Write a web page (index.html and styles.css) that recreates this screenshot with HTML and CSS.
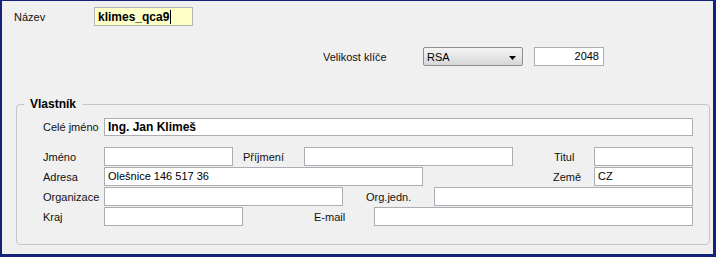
FILE: index.html
```html
<!DOCTYPE html>
<html lang="cs">
<head>
    <meta charset="utf-8" />
    <title>Certifikát</title>
    <link rel="stylesheet" href="styles.css">
</head>
<body>
    <div class="window">
        <div class="name-row">
            <label class="name-label">Název</label>
            <div class="name-input">klimes_qca9<span class="caret"></span></div>
        </div>

        <div class="key-row">
            <label class="key-label">Velikost klíče</label>
            <div class="select">
                <span>RSA</span>
                <svg class="arrow" width="7" height="4" viewBox="0 0 7 4"><path d="M0 0h7L3.5 4z" fill="#000"/></svg>
            </div>
            <div class="field num">2048</div>
        </div>

        <fieldset class="owner">
            <legend>Vlastník</legend>

            <div class="row first">
                <label class="lbl">Celé jméno</label>
                <div class="field grow bold">Ing. Jan Klimeš</div>
            </div>

            <div class="row spaced">
                <label class="lbl">Jméno</label>
                <div class="field w129"></div>
                <label class="lbl surname">Příjmení</label>
                <div class="field w209"></div>
                <label class="lbl title">Titul</label>
                <div class="field w99"></div>
            </div>

            <div class="row">
                <label class="lbl">Adresa</label>
                <div class="field w319">Olešnice 146 517 36</div>
                <label class="lbl country">Země</label>
                <div class="field w99">CZ</div>
            </div>

            <div class="row">
                <label class="lbl">Organizace</label>
                <div class="field w239"></div>
                <label class="lbl unit">Org.jedn.</label>
                <div class="field grow"></div>
            </div>

            <div class="row">
                <label class="lbl">Kraj</label>
                <div class="field w139"></div>
                <label class="lbl mail">E-mail</label>
                <div class="field grow"></div>
            </div>
        </fieldset>
    </div>
</body>
</html>
```

FILE: styles.css
```css
* { box-sizing: border-box; margin: 0; padding: 0; }
body {
    font-family: "Liberation Sans", Arial, sans-serif;
    font-size: 11px;
    color: #111;
    background: #f0f0f0;
}
.window {
    width: 716px;
    height: 257px;
    background: #f0f0f0;
    border-style: solid;
    border-color: #14237a;
    border-width: 1px 3px 3px 2px;
    padding: 6px 0 0 12px;
}
.name-row {
    display: flex;
    align-items: center;
    height: 19px;
}
.name-label {
    width: 80px;
}
.name-input {
    width: 99px;
    height: 19px;
    background: #ffffc8;
    border: 1px solid #b4b4b4;
    font-size: 12px;
    font-weight: bold;
    color: #000;
    padding: 0 3px;
    line-height: 16px;
    display: flex;
    align-items: center;
}
.caret {
    display: inline-block;
    width: 1px;
    height: 14px;
    background: #000;
    margin-left: 1px;
}
.key-row {
    display: flex;
    align-items: center;
    margin-top: 21px;
    padding-left: 309px;
    height: 19px;
}
.key-label {
    width: 100px;
}
.select {
    width: 100px;
    height: 19px;
    border: 1px solid #8e8f8f;
    border-radius: 2px;
    background: linear-gradient(#f4f4f4, #e6e6e6 50%, #d6d6d6);
    display: flex;
    align-items: center;
    justify-content: space-between;
    padding: 0 6px 0 3px;
    color: #000;
}
.arrow {
    margin-top: 3px;
}
.field {
    height: 19px;
    background: #fff;
    border: 1px solid #abadb3;
    padding: 0 3px;
    line-height: 17px;
    color: #000;
    white-space: nowrap;
}
.num {
    width: 70px;
    margin-left: 11px;
    text-align: right;
    padding-right: 4px;
}
.owner {
    width: 694px;
    height: 148px;
    margin: 31px 0 0 2px;
    border: 1px solid #c3c7cb;
    border-radius: 4px;
    padding: 7px 16px 0 26px;
}
.owner legend {
    font-weight: bold;
    font-size: 12px;
    line-height: 14px;
    padding: 0 6px;
    margin-left: -19px;
    color: #000;
}
.row {
    display: flex;
    align-items: center;
    height: 19px;
    margin-top: 1px;
}
.row.first {
    margin-top: 0;
    height: 18px;
}
.row.first .field {
    height: 18px;
    line-height: 16px;
}
.row.spaced {
    margin-top: 11px;
}
.lbl {
    width: 61px;
    flex-shrink: 0;
}
.grow { flex: 1; }
.bold {
    font-weight: bold;
    font-size: 12px;
}
.w99 { width: 99px; }
.w129 { width: 129px; }
.w139 { width: 139px; }
.w209 { width: 209px; }
.w239 { width: 239px; }
.w319 { width: 319px; }
.surname { margin-left: 10px; }
.title { margin-left: 41px; width: 40px; }
.country { margin-left: 130px; width: 41px; }
.unit { margin-left: 23px; width: 68px; }
.mail { margin-left: 71px; width: 60px; }
```
